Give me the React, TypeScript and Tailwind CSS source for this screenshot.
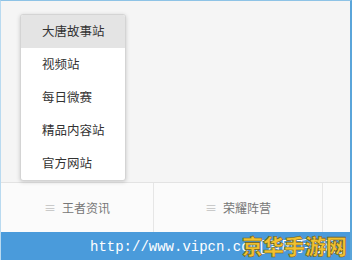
const MENU = ["大唐故事站", "视频站", "每日微赛", "精品内容站", "官方网站"];

export default function App() {
  return (
    <div
      className="relative w-[352px] h-[260px] overflow-hidden flex flex-col bg-[#f5f5f5] border-t border-l border-r-2 border-t-[#8ec3e6] border-l-[#b9daf0] border-r-[#5aa5da]"
      style={{ fontFamily: '"Noto Sans CJK SC", "Liberation Sans", sans-serif' }}
    >
      <div className="relative h-[181px] shrink-0">
        <div className="absolute left-[19px] top-[13px] w-[106px] bg-white border border-[#d4d4d4] rounded-[3px] shadow-[0_1px_4px_rgba(0,0,0,0.18)] overflow-hidden">
          {MENU.map((item, i) => (
            <div
              key={item}
              className={`h-[33px] flex items-center pl-[21px] text-[12.5px] text-[#333] ${i === 0 ? "bg-[#e4e4e4]" : ""}`}
            >
              {item}
            </div>
          ))}
        </div>
      </div>
      <div className="h-[50px] shrink-0 bg-[#fbfbfb] border-t border-[#e3e3e3] grid grid-cols-[153px_169px_1fr]">
        <div className="flex items-center justify-center gap-[6px] text-[12px] text-[#777] border-r border-[#e6e6e6]">
          <span className="text-[#c0c0c0] text-[12px]">≡</span>
          王者资讯
        </div>
        <div className="flex items-center justify-center gap-[6px] text-[12px] text-[#777] border-r border-[#e6e6e6]">
          <span className="text-[#c0c0c0] text-[12px]">≡</span>
          荣耀阵营
        </div>
        <div />
      </div>
      <div className="flex-1 bg-[#4a9bdb] flex items-center pl-[89px] pt-[1px]">
        <span
          className="text-white text-[14px] whitespace-nowrap leading-none"
          style={{ fontFamily: '"Liberation Mono", "Noto Sans CJK SC", monospace' }}
        >
          http://www.vipcn.com[清风手游网]
        </span>
      </div>
      <div
        className="absolute left-[241px] top-[229px] text-[21px] font-black text-[#f2c12e] whitespace-nowrap"
        style={{ WebkitTextStroke: "0.6px #6b5a1a" }}
      >
        京华手游网
      </div>
    </div>
  );
}
